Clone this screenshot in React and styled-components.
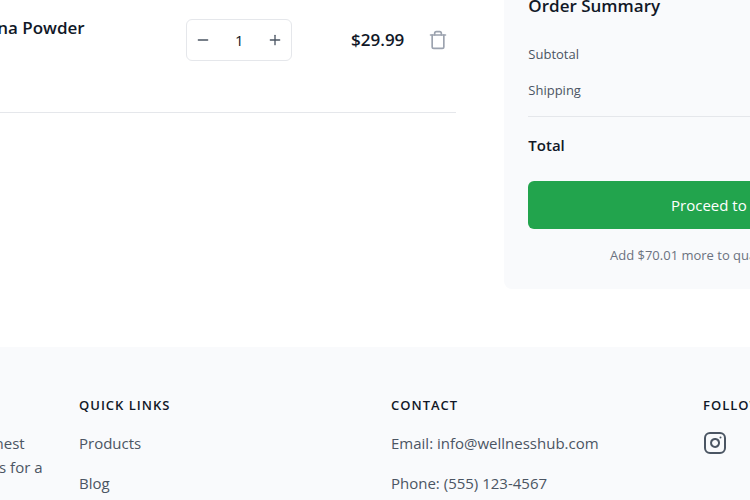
import { useState } from 'react';
import styled, { createGlobalStyle } from 'styled-components';
import { Instagram, Minus, Plus, Trash } from 'lucide-react';

const App = () => {
  const [quantity, setQuantity] = useState(1);

  return (
    <Page>
      <GlobalStyle />
      <Main>
        <CartList>
          <CartItem>
            <Thumbnail />
            <ItemInfo>
              <ItemName>Organic Banana Powder</ItemName>
              <ItemSize>250g</ItemSize>
            </ItemInfo>
            <Stepper>
              <StepButton
                type="button"
                aria-label="Decrease quantity"
                onClick={() => setQuantity(Math.max(1, quantity - 1))}
              >
                <Minus size={16} />
              </StepButton>
              <Quantity>{quantity}</Quantity>
              <StepButton
                type="button"
                aria-label="Increase quantity"
                onClick={() => setQuantity(quantity + 1)}
              >
                <Plus size={16} />
              </StepButton>
            </Stepper>
            <Price>$29.99</Price>
            <RemoveButton type="button" aria-label="Remove item">
              <Trash size={20} />
            </RemoveButton>
          </CartItem>
        </CartList>
        <Summary>
          <SummaryTitle>Order Summary</SummaryTitle>
          <SummaryRow>Subtotal</SummaryRow>
          <SummaryRow>Shipping</SummaryRow>
          <TotalRow>Total</TotalRow>
          <CheckoutButton type="button">Proceed to Checkout</CheckoutButton>
          <Note>Add $70.01 more to qualify for free shipping</Note>
        </Summary>
      </Main>
      <Footer>
        <FooterGrid>
          <div>
            <FooterTitle>Wellness Hub</FooterTitle>
            <About>
              Your trusted partner for all the finest
              <br />
              and natural wellness supplements for a
              <br />
              healthier life.
            </About>
          </div>
          <div>
            <FooterTitle>Quick Links</FooterTitle>
            <FooterList>
              <li>
                <FooterLink href="#products">Products</FooterLink>
              </li>
              <li>
                <FooterLink href="#blog">Blog</FooterLink>
              </li>
            </FooterList>
          </div>
          <div>
            <FooterTitle>Contact</FooterTitle>
            <FooterList>
              <li>Email: info@wellnesshub.com</li>
              <li>Phone: (555) 123-4567</li>
            </FooterList>
          </div>
          <div>
            <FooterTitle>Follow Us</FooterTitle>
            <FooterList>
              <li>
                <FooterLink href="#instagram" aria-label="Instagram">
                  <Instagram size={24} />
                </FooterLink>
              </li>
            </FooterList>
          </div>
        </FooterGrid>
      </Footer>
    </Page>
  );
};

export default App;

const GlobalStyle = createGlobalStyle`
  * {
    box-sizing: border-box;
    margin: 0;
    padding: 0;
  }
  body {
    background: #ffffff;
    color: #111827;
    font-family: 'Open Sans', 'Noto Sans', sans-serif;
    font-size: 15px;
    line-height: 24px;
  }
  button {
    border: none;
    background: none;
    font: inherit;
    cursor: pointer;
  }
  ul {
    list-style: none;
  }
  svg {
    display: block;
  }
`;
const Page = styled.div`
  display: flex;
  flex-direction: column;
  height: 100vh;
  overflow: hidden;
`;
const Main = styled.main`
  display: grid;
  grid-template-columns: repeat(12, minmax(0, 1fr));
  column-gap: 48px;
  align-items: start;
  margin: -32px -233px 0;
  padding-bottom: 58px;
`;
const CartList = styled.ul`
  grid-column: span 7;
`;
const CartItem = styled.li`
  display: flex;
  align-items: center;
  padding: 24px 0;
  border-bottom: 1px solid #e5e7eb;
`;
const Thumbnail = styled.div`
  width: 96px;
  height: 96px;
  border-radius: 8px;
  background: #f3f4f6;
`;
const ItemInfo = styled.div`
  flex: 1;
  margin-left: 24px;
`;
const ItemName = styled.h3`
  font-size: 17px;
  font-weight: 600;
  line-height: 28px;
`;
const ItemSize = styled.p`
  color: #6b7280;
`;
const Stepper = styled.div`
  display: flex;
  align-items: center;
  height: 42px;
  border: 1px solid #e5e7eb;
  border-radius: 6px;
`;
const StepButton = styled.button`
  padding: 8px;
  color: #4b5563;
`;
const Quantity = styled.span`
  width: 40px;
  text-align: center;
`;
const Price = styled.p`
  width: 96px;
  margin: 0 16px;
  font-size: 17px;
  font-weight: 600;
  line-height: 28px;
  text-align: right;
`;
const RemoveButton = styled.button`
  padding: 8px;
  color: #9ca3af;
`;
const Summary = styled.section`
  grid-column: span 5;
  padding: 24px;
  border-radius: 8px;
  background: #f9fafc;
`;
const SummaryTitle = styled.h2`
  margin-bottom: 24px;
  font-size: 17px;
  font-weight: 600;
  line-height: 28px;
`;
const SummaryRow = styled.p`
  margin-bottom: 16px;
  color: #4b5563;
  font-size: 13px;
  line-height: 20px;
`;
const TotalRow = styled.p`
  padding-top: 16px;
  border-top: 1px solid #e5e7eb;
  font-weight: 600;
`;
const CheckoutButton = styled.button`
  width: 100%;
  margin: 24px 0 16px;
  padding: 12px;
  border-radius: 6px;
  background: #22a44d;
  color: #ffffff;
  font-weight: 500;
`;
const Note = styled.p`
  color: #6b7280;
  font-size: 13px;
  line-height: 20px;
  text-align: center;
`;
const Footer = styled.footer`
  flex: 1;
  padding-top: 48px;
  background: #f9fafc;
`;
const FooterGrid = styled.div`
  display: grid;
  grid-template-columns: repeat(4, minmax(0, 1fr));
  gap: 32px;
  margin: 0 -233px;
`;
const FooterTitle = styled.h3`
  margin-bottom: 16px;
  font-size: 13px;
  font-weight: 600;
  line-height: 20px;
  letter-spacing: 1px;
  text-transform: uppercase;
`;
const About = styled.p`
  color: #4b5563;
  white-space: nowrap;
`;
const FooterList = styled.ul`
  display: grid;
  gap: 16px;
  color: #4b5563;
`;
const FooterLink = styled.a`
  color: inherit;
  text-decoration: none;
`;
